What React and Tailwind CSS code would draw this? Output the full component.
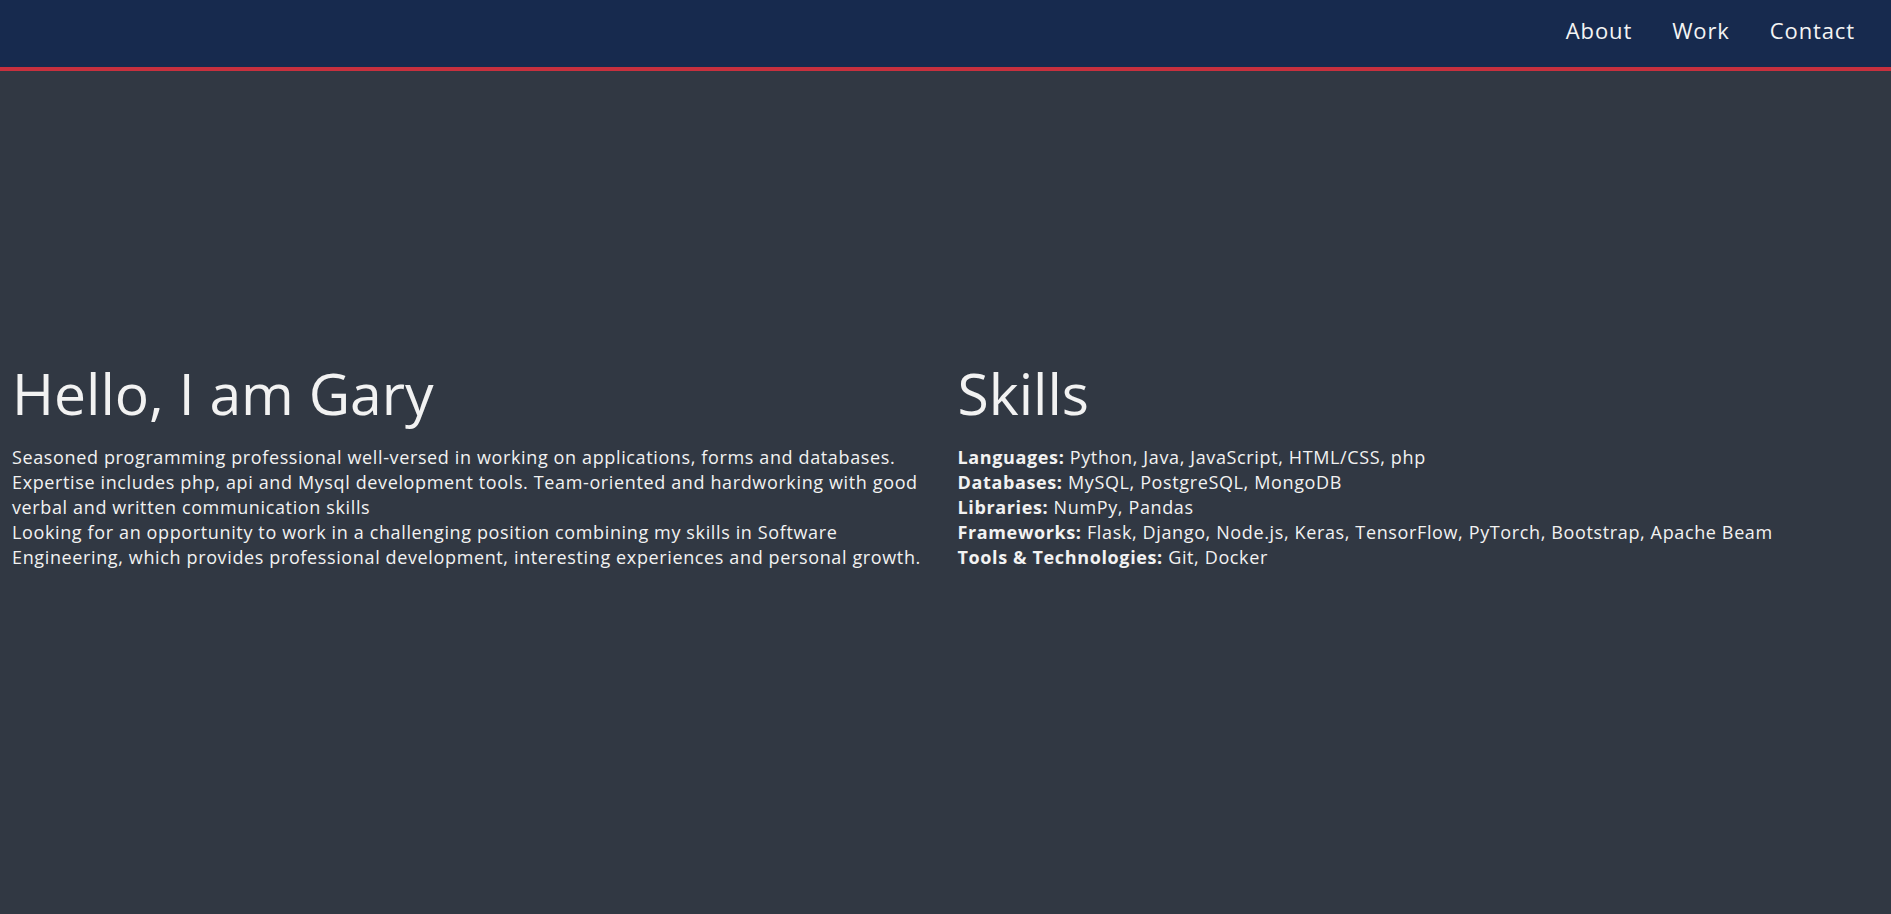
export default function App() {
  const skills = [
    ["Languages:", "Python, Java, JavaScript, HTML/CSS, php"],
    ["Databases:", "MySQL, PostgreSQL, MongoDB"],
    ["Libraries:", "NumPy, Pandas"],
    ["Frameworks:", "Flask, Django, Node.js, Keras, TensorFlow, PyTorch, Bootstrap, Apache Beam"],
    ["Tools & Technologies:", "Git, Docker"],
  ];

  return (
    <div className="min-h-screen bg-[#313843] text-[#f2f2f2] font-['Open_Sans',sans-serif]">
      <header className="h-[71px] bg-[#172a4e] border-b-4 border-[#c7303e] flex items-center justify-end gap-[40px] pr-[36px] pb-[7px]">
        <a className="text-[22px] tracking-[0.04em] text-[#f4f4f4]" href="#">About</a>
        <a className="text-[22px] tracking-[0.04em] text-[#f4f4f4]" href="#">Work</a>
        <a className="text-[22px] tracking-[0.04em] text-[#f4f4f4]" href="#">Contact</a>
      </header>

      <main className="flex items-start pt-[288px]">
        <div className="w-1/2 px-3">
          <h1 className="text-[57px] leading-[1.2] mb-[18px]">Hello, I am Gary</h1>
          <p className="text-[18px] tracking-[0.035em] leading-[25px]">
            Seasoned programming professional well-versed in working on applications, forms and databases. Expertise includes php, api and Mysql development tools. Team-oriented and hardworking with good verbal and written communication skills
            <br />
            Looking for an opportunity to work in a challenging position combining my skills in Software Engineering, which provides professional development, interesting experiences and personal growth.
          </p>
        </div>
        <div className="w-1/2 px-3">
          <h1 className="text-[57px] leading-[1.2] mb-[18px]">Skills</h1>
          <div className="text-[18px] tracking-[0.035em] leading-[25px]">
            {skills.map(([label, items]) => (
              <div key={label}>
                <span className="font-bold">{label}</span> {items}
              </div>
            ))}
          </div>
        </div>
      </main>
    </div>
  );
}
